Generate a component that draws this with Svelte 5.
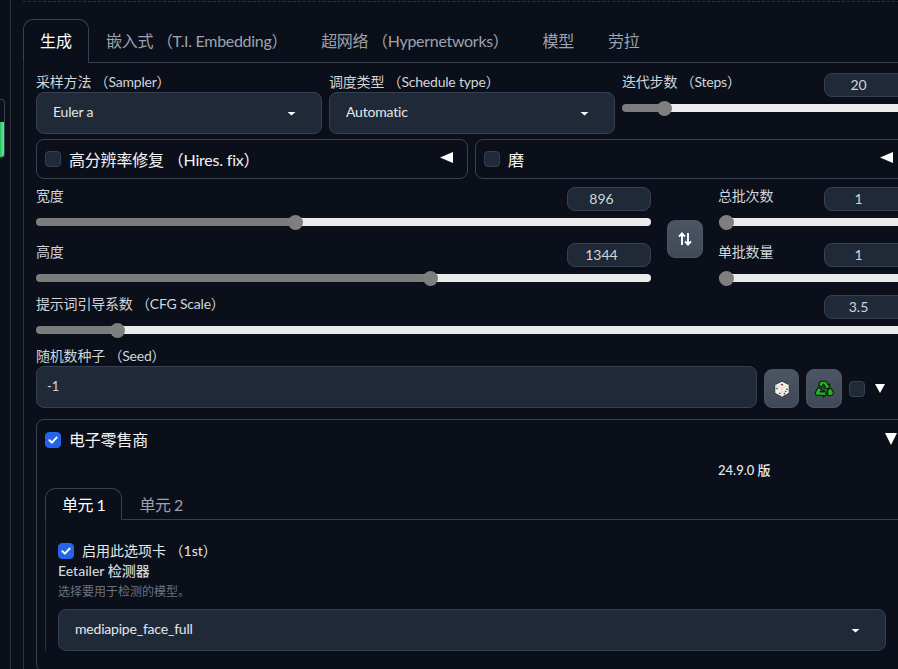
<script>
  const pct = (v, min, max) => ((v - min) / (max - min)) * 100;
  const mainTabs = ['嵌入式 （T.I. Embedding）', '超网络 （Hypernetworks）', '模型', '劳拉'];
</script>

{#snippet slider(label, value, min, max)}
  <div class="slider-block">
    <div class="slider-head">
      <span class="label">{label}</span>
      <span class="num">{value}</span>
    </div>
    <div class="track-wrap">
      <div class="track" style="--p: {pct(value, min, max)}">
        <span class="thumb"></span>
      </div>
    </div>
  </div>
{/snippet}

{#snippet dropdown(text)}
  <div class="dropdown">
    <span>{text}</span>
    <i class="caret"></i>
  </div>
{/snippet}

{#snippet check()}
  <span class="checkbox on">
    <svg viewBox="0 0 16 16" width="16" height="16"><path d="M4.4 8.2l2.5 2.4 4.7-5" fill="none" stroke="#fff" stroke-width="2" stroke-linecap="round" stroke-linejoin="round"/></svg>
  </span>
{/snippet}

<main class="page">
  <div class="rail">
    <div class="meter"><div class="meter-fill"></div></div>
  </div>

  <div class="shell">
    <div class="top-strip"></div>

    <div class="tabs">
      <button class="tab active">生成</button>
      {#each mainTabs as t}
        <button class="tab">{t}</button>
      {/each}
    </div>

    <div class="panel">
      <div class="row-three">
        <div>
          <div class="label field-label">采样方法 （Sampler）</div>
          {@render dropdown('Euler a')}
        </div>
        <div>
          <div class="label field-label">调度类型 （Schedule type）</div>
          {@render dropdown('Automatic')}
        </div>
        {@render slider('迭代步数 （Steps）', 20, 1, 150)}
      </div>

      <div class="row-two">
        <div class="acc-bar">
          <span class="checkbox"></span>
          <span class="acc-title">高分辨率修复 （Hires. fix）</span>
          <i class="tri-left"></i>
        </div>
        <div class="acc-bar">
          <span class="checkbox"></span>
          <span class="acc-title">磨</span>
          <i class="tri-left"></i>
        </div>
      </div>

      <div class="size-grid">
        <div class="stack">
          {@render slider('宽度', 896, 64, 2048)}
          {@render slider('高度', 1344, 64, 2048)}
        </div>
        <div class="swap-col">
          <button class="tool swap" aria-label="swap">
            <svg viewBox="0 0 16 16" width="16" height="16"><path d="M5 14V3M2 5.6L5 2.4l3 3.2M11 2v11M8 10.4l3 3.2 3-3.2" fill="none" stroke="#fff" stroke-width="1.9"/></svg>
          </button>
        </div>
        <div class="stack">
          {@render slider('总批次数', 1, 1, 100)}
          {@render slider('单批数量', 1, 1, 8)}
        </div>
      </div>

      {@render slider('提示词引导系数 （CFG Scale）', 3.5, 1, 30)}

      <div class="seed">
        <div class="label field-label">随机数种子 （Seed）</div>
        <div class="seed-row">
          <div class="seed-input">-1</div>
          <button class="tool dice" aria-label="random">
            <svg viewBox="0 0 20 20" width="20" height="20">
              <path d="M10 2.2l7.2 3.6v8.4L10 18l-7.2-3.8V5.8z" fill="#f4f1ea" stroke="#20242b" stroke-width="0.8"/>
              <path d="M2.8 5.8L10 9.6l7.2-3.8M10 9.6V18" fill="none" stroke="#c9c6bd" stroke-width="0.7"/>
              <ellipse cx="10" cy="5.7" rx="1.3" ry="0.9" fill="#b0325a"/>
              <g fill="#3b3b3b">
                <circle cx="5" cy="9.6" r="0.8"/><circle cx="7.8" cy="14.2" r="0.8"/>
                <circle cx="12.4" cy="14.6" r="0.8"/><circle cx="15" cy="10.4" r="0.8"/><circle cx="13.7" cy="12.5" r="0.8"/>
              </g>
            </svg>
          </button>
          <button class="tool recycle" aria-label="reuse">
            <svg viewBox="0 0 20 20" width="20" height="20">
              <g fill="#1fb81f" stroke="#052006" stroke-width="1.1" stroke-linejoin="round">
                <path d="M6.6 2.2h5.6l2.2 3.7 1.5-.9-1.4 4.8-4.8-1.1 1.5-.9-1.7-2.7-1.7 2.9-3.4-2z"/>
                <path d="M4.2 8.2l3.5 2-1.5 2.7h3.2v-1.8l3.2 3.6-3.2 3.5v-1.8H3.6q-2.6-.3-2.2-2.8z"/>
                <path d="M13.6 11l3.4-2 2.2 4q.6 2.7-1.7 3.5l-3.7.1v-3.8z"/>
              </g>
            </svg>
          </button>
          <div class="seed-extra">
            <span class="checkbox"></span>
            <i class="tri-down small"></i>
          </div>
        </div>
      </div>

      <section class="ext">
        <div class="ext-head">
          {@render check()}
          <span class="acc-title">电子零售商</span>
          <i class="tri-down"></i>
        </div>
        <div class="version">24.9.0 版</div>

        <div class="tabs inner">
          <button class="tab active">单元 1</button>
          <button class="tab">单元 2</button>
        </div>
        <div class="panel inner-panel">
          <label class="enable">
            {@render check()}
            <span>启用此选项卡 （1st）</span>
          </label>
          <div class="det-title">Eetailer 检测器</div>
          <div class="det-desc">选择要用于检测的模型。</div>
          {@render dropdown('mediapipe_face_full')}
        </div>
      </section>
    </div>
  </div>
</main>

<style>
  :global(html), :global(body) {
    margin: 0;
    background: #0b0f19;
    overflow: hidden;
  }
  .page {
    display: flex;
    width: 920px;
    height: 669px;
    overflow: hidden;
    background: #0b0f19;
    color: #d1d5db;
    font-family: "Lato", "Noto Sans CJK SC", sans-serif;
    font-size: 14px;
  }
  button {
    font: inherit;
    background: none;
    border: 0;
    color: inherit;
    padding: 0;
  }

  .rail {
    width: 5px;
    flex: none;
  }
  .meter {
    margin-top: 99px;
    height: 59px;
    box-sizing: border-box;
    border: 1px solid #374151;
    border-left: 0;
    border-radius: 0 4px 4px 0;
    display: flex;
    flex-direction: column;
    justify-content: flex-end;
    overflow: hidden;
  }
  .meter-fill {
    height: 35px;
    background: linear-gradient(90deg, #22c55e, #6ee7a0);
  }

  .shell {
    flex: 1;
    margin-left: 5px;
    border-left: 1px solid #2b303b;
    padding-left: 12px;
    min-width: 0;
  }
  .top-strip {
    height: 1px;
    margin-bottom: 17px;
    border-bottom: 1px dashed #2b3240;
  }

  .tabs {
    display: flex;
    height: 44px;
    box-sizing: border-box;
    border-bottom: 1px solid #374151;
  }
  .tab {
    height: 44px;
    box-sizing: border-box;
    padding: 0 16px 2px;
    border: 1px solid transparent;
    border-radius: 10px 10px 0 0;
    font-size: 16px;
    letter-spacing: -0.3px;
    color: #9ca3af;
    white-space: nowrap;
    flex: none;
  }
  .tab.active {
    color: #fff;
    letter-spacing: 0;
    border-color: #374151;
    border-bottom-color: #0b0f19;
    background: #0b0f19;
  }

  .panel {
    border-left: 1px solid #2b303b;
    padding: 10px 12px 0;
    display: flex;
    flex-direction: column;
  }

  .label {
    color: #d1d5db;
    font-size: 14px;
    line-height: 18px;
    letter-spacing: -0.2px;
    white-space: nowrap;
  }
  .field-label {
    height: 19px;
  }

  .row-three {
    display: grid;
    grid-template-columns: repeat(3, 1fr);
    gap: 7px;
  }
  .row-two {
    display: grid;
    grid-template-columns: 432px 1fr;
    gap: 7px;
    margin-top: 5px;
  }

  .dropdown {
    height: 42px;
    box-sizing: border-box;
    padding: 0 25px 3px 16px;
    display: flex;
    align-items: center;
    justify-content: space-between;
    background: #1f2937;
    border: 1px solid #374151;
    border-radius: 8px;
    color: #e5e7eb;
    letter-spacing: -0.2px;
  }
  .caret {
    width: 9px;
    height: 4px;
    margin-top: 4px;
    background: #fff;
    clip-path: polygon(0 0, 100% 0, 50% 100%);
  }

  .acc-bar {
    height: 40px;
    box-sizing: border-box;
    display: flex;
    align-items: center;
    gap: 8px;
    padding: 0 14px 0 8px;
    border: 1px solid #374151;
    border-radius: 8px;
  }
  .acc-title {
    font-size: 16px;
    letter-spacing: -0.2px;
    color: #f3f4f6;
    flex: 1;
  }
  .tri-left {
    width: 13px;
    height: 11px;
    background: #fff;
    clip-path: polygon(0 50%, 100% 0, 100% 100%);
    margin-top: -3px;
  }
  .tri-down {
    width: 12px;
    height: 12px;
    background: #fff;
    clip-path: polygon(0 0, 100% 0, 50% 100%);
  }
  .tri-down.small {
    width: 10px;
    height: 9px;
  }

  .checkbox {
    width: 16px;
    height: 16px;
    box-sizing: border-box;
    flex: none;
    background: #1f2937;
    border: 1px solid #374151;
    border-radius: 4px;
    display: block;
  }
  .checkbox.on {
    background: #2563eb;
    border-color: #2563eb;
  }
  .checkbox.on svg {
    display: block;
    margin: -1px;
  }

  .slider-head {
    display: flex;
    justify-content: space-between;
    height: 24px;
  }
  .num {
    width: 84px;
    height: 24px;
    box-sizing: border-box;
    padding-right: 15px;
    text-align: center;
    line-height: 22px;
    font-size: 14px;
    color: #d1d5db;
    background: #1f2937;
    border: 1px solid #374151;
    border-radius: 8px;
  }
  .track-wrap {
    height: 22px;
    display: flex;
    align-items: center;
  }
  .track {
    --w: calc((100% - 15px) * var(--p) / 100 + 7.5px);
    position: relative;
    width: 100%;
    height: 8px;
    border-radius: 4px;
    background: linear-gradient(90deg, #7c7c7c var(--w), #ececec var(--w));
  }
  .thumb {
    position: absolute;
    top: -3.5px;
    left: calc(var(--w) - 7.5px);
    width: 15px;
    height: 15px;
    border-radius: 50%;
    background: #7f7f7f;
  }

  .size-grid {
    display: grid;
    grid-template-columns: 615px 36px 1fr;
    column-gap: 16px;
    margin-top: 8px;
    margin-bottom: 6px;
  }
  .size-grid > :last-child {
    margin-left: -1px;
  }
  .size-grid > :last-child .track-wrap {
    margin-left: 1px;
  }
  .stack {
    display: flex;
    flex-direction: column;
    gap: 10px;
  }
  .swap-col {
    padding-top: 33px;
  }
  .tool {
    display: flex;
    align-items: center;
    justify-content: center;
    box-sizing: border-box;
    background: linear-gradient(180deg, #4b5563, #3f4957);
    border: 1px solid #4b5563;
    border-radius: 8px;
  }
  .swap {
    width: 36px;
    height: 38px;
  }

  .seed {
    margin-top: 6px;
  }
  .seed-row {
    display: flex;
    align-items: flex-end;
    gap: 7px;
  }
  .seed-input {
    flex: 1;
    height: 42px;
    box-sizing: border-box;
    padding-left: 10px;
    line-height: 38px;
    font-size: 13px;
    color: #d1d5db;
    background: #1f2937;
    border: 1px solid #374151;
    border-radius: 8px;
  }
  .dice {
    width: 35px;
    height: 39px;
  }
  .recycle {
    width: 36px;
    height: 39px;
  }
  .seed-extra {
    width: 59px;
    height: 39px;
    display: flex;
    align-items: center;
    gap: 10px;
    flex: none;
  }

  .ext {
    margin-top: 11px;
    border: 1px solid #374151;
    border-radius: 8px;
    padding: 0 8px 20px;
  }
  .ext-head {
    height: 40px;
    display: flex;
    align-items: center;
    gap: 8px;
    padding-right: 2px;
  }
  .ext-head .acc-title {
    padding-bottom: 2px;
  }
  .ext-head .tri-down {
    margin-top: -2px;
  }
  .version {
    margin: 0 0 0 673px;
    height: 28px;
    line-height: 20px;
    font-size: 13px;
    font-weight: 500;
    color: #e5e7eb;
  }
  .tabs.inner {
    height: 32px;
  }
  .tabs.inner .tab {
    height: 32px;
    padding-bottom: 0;
    letter-spacing: -0.5px;
  }
  .inner-panel {
    padding: 23px 12px 0;
    border-right: 1px solid #2b303b;
  }
  .enable {
    display: flex;
    align-items: center;
    gap: 8px;
    height: 16px;
    font-size: 14px;
    color: #e5e7eb;
  }
  .enable span:last-child {
    padding-bottom: 2px;
  }
  .det-title {
    margin-top: 2px;
    line-height: 20px;
    font-size: 14px;
    font-weight: 500;
    color: #d1d5db;
  }
  .det-desc {
    margin-top: 1px;
    line-height: 20px;
    font-size: 12px;
    color: #6b7280;
    margin-bottom: 7px;
  }
</style>
